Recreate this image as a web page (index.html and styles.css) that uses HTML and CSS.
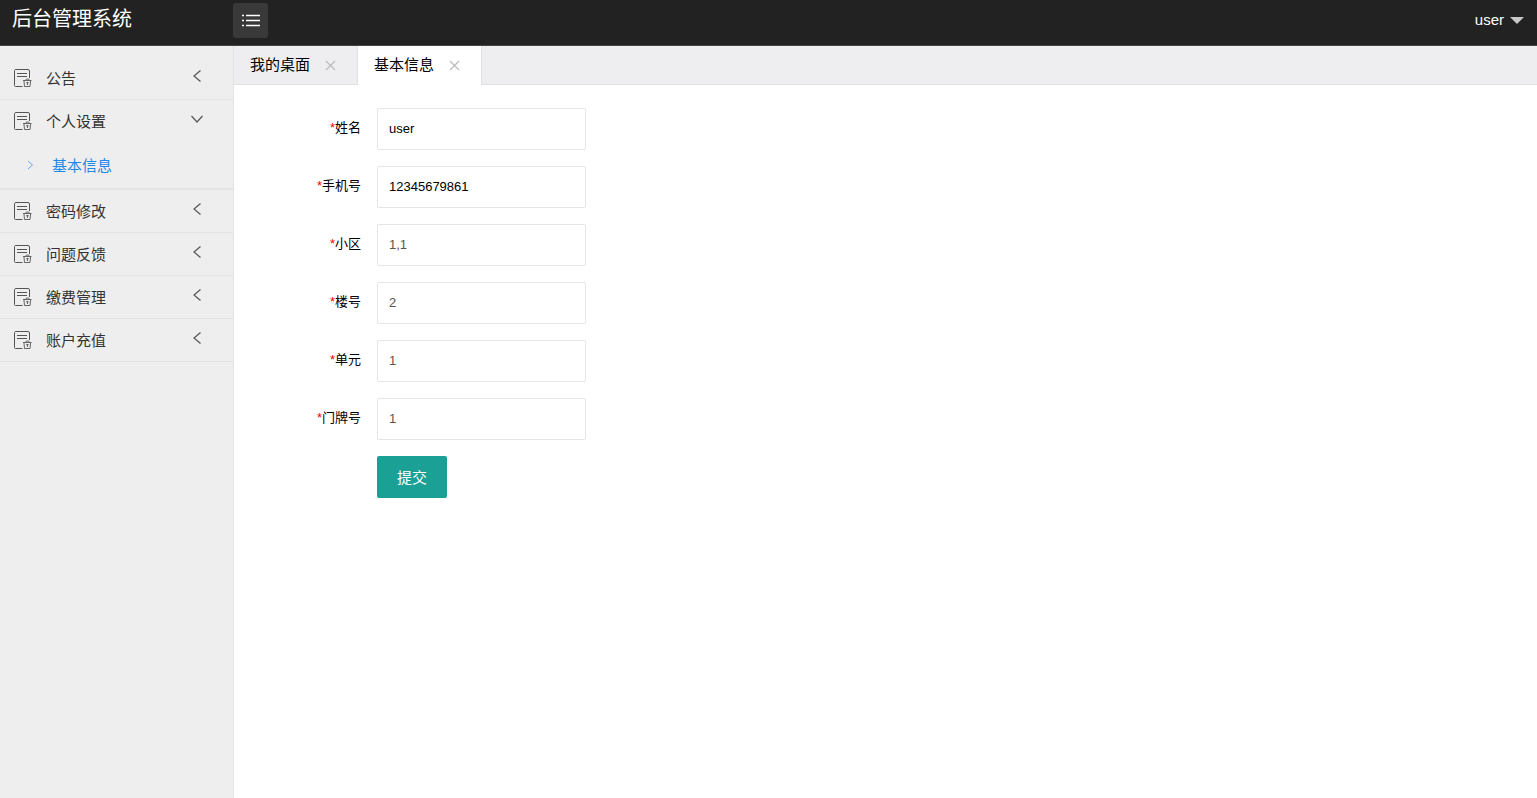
FILE: index.html
```html
<!DOCTYPE html>
<html lang="zh-CN">
<head>
<meta charset="utf-8">
<meta name="viewport" content="width=device-width, initial-scale=1">
<title>后台管理系统</title>
<link rel="stylesheet" href="styles.css">
</head>
<body>
<svg class="symbols" aria-hidden="true">
  <symbol id="doc" viewBox="0 0 19 20">
    <path d="M9.500 18.500H2.500A1 1 0 0 1 1.500 17.500V2.500A1.500 1.500 0 0 1 3 1.500h12a1.500 1.500 0 0 1 1.500 1.500V10M4 5.500h10M4 8.500h10"/>
    <path stroke-width=".9" d="M10 12.500h8.500M11 13l.5 5.500h5.500l.6-5.500M12.500 12.300l1-1.300h2l1 1.300M14.500 14v3M13.200 14.700h2.400"/>
  </symbol>
  <symbol id="left" viewBox="0 0 10 14"><path stroke-width="1.2" d="M8.500 1.500 2 7l6.500 5.500"/></symbol>
  <symbol id="down" viewBox="0 0 14 10"><path stroke-width="1.2" d="M1.500 2 7 8l5.500-6"/></symbol>
  <symbol id="right" viewBox="0 0 7 10"><path d="M1 1l4.500 4L1 9"/></symbol>
  <symbol id="cross" viewBox="0 0 11 11"><path stroke-width="1.200" d="M1 1l9 9M10 1l-9 9"/></symbol>
</svg>
<header class="header">
  <h1 class="brand">后台管理系统</h1>
  <button class="toggle" type="button" aria-label="切换菜单">
    <svg width="19" height="13" viewBox="0 0 19 13"><path stroke-width="1.400" d="M5 1.500h14M5 6.500h14M5 11.500h14M1 1.500h2M1 6.500h2M1 11.500h2"/></svg>
  </button>
  <button class="account" type="button">user<span class="caret"></span></button>
</header>
<div class="body">
  <nav class="sidebar">
    <a class="item" href="#"><svg class="doc"><use href="#doc"/></svg><span class="name">公告</span><svg class="left"><use href="#left"/></svg></a>
    <div class="group">
      <a class="item" href="#"><svg class="doc"><use href="#doc"/></svg><span class="name">个人设置</span><svg class="down"><use href="#down"/></svg></a>
      <a class="subitem" href="#"><svg class="right"><use href="#right"/></svg><span class="subname">基本信息</span></a>
    </div>
    <a class="item" href="#"><svg class="doc"><use href="#doc"/></svg><span class="name">密码修改</span><svg class="left"><use href="#left"/></svg></a>
    <a class="item" href="#"><svg class="doc"><use href="#doc"/></svg><span class="name">问题反馈</span><svg class="left"><use href="#left"/></svg></a>
    <a class="item" href="#"><svg class="doc"><use href="#doc"/></svg><span class="name">缴费管理</span><svg class="left"><use href="#left"/></svg></a>
    <a class="item" href="#"><svg class="doc"><use href="#doc"/></svg><span class="name">账户充值</span><svg class="left"><use href="#left"/></svg></a>
  </nav>
  <main class="main">
    <div class="tabs">
      <div class="tab"><a href="#">我的桌面</a><button class="close" type="button" aria-label="关闭我的桌面"><svg><use href="#cross"/></svg></button></div>
      <div class="tab active"><a href="#">基本信息</a><button class="close" type="button" aria-label="关闭基本信息"><svg><use href="#cross"/></svg></button></div>
    </div>
    <form class="form">
      <div class="row"><label for="name"><span class="star">*</span>姓名</label><input id="name" type="text" value="user"></div>
      <div class="row"><label for="phone"><span class="star">*</span>手机号</label><input id="phone" type="text" value="12345679861"></div>
      <div class="row"><label for="estate"><span class="star">*</span>小区</label><input class="fixed" id="estate" type="text" value="1,1" readonly></div>
      <div class="row"><label for="building"><span class="star">*</span>楼号</label><input class="fixed" id="building" type="text" value="2" readonly></div>
      <div class="row"><label for="unit"><span class="star">*</span>单元</label><input class="fixed" id="unit" type="text" value="1" readonly></div>
      <div class="row"><label for="door"><span class="star">*</span>门牌号</label><input class="fixed" id="door" type="text" value="1" readonly></div>
      <button class="submit" type="submit">提交</button>
    </form>
  </main>
</div>
</body>
</html>
```
FILE: styles.css
```css
* {
  box-sizing: border-box;
}

body {
  margin: 0;
  min-height: 100vh;
  display: flex;
  flex-direction: column;
  font-family: "Liberation Sans", "Noto Sans CJK SC", sans-serif;
  font-size: 15px;
  color: #000;
  background: #fff;
}

a {
  color: inherit;
  text-decoration: none;
}

button,
input {
  font-family: inherit;
}

button {
  border: 0;
  padding: 0;
  background: none;
  cursor: pointer;
}

svg {
  display: block;
  flex: none;
  fill: none;
  stroke: currentColor;
}

.symbols {
  position: absolute;
  width: 0;
  height: 0;
}

.header {
  display: flex;
  align-items: flex-start;
  height: 46px;
  padding: 3px 13px 0 12px;
  background: #222;
  border-bottom: 1px solid #444;
  color: #fff;
}

.brand {
  width: 221px;
  margin: 0;
  font-size: 20px;
  font-weight: 400;
  line-height: 32px;
}

.toggle {
  display: grid;
  place-items: center;
  width: 35px;
  height: 35px;
  border-radius: 3px;
  background: #393939;
  color: #fff;
}

.account {
  display: flex;
  align-items: center;
  gap: 6px;
  margin-left: auto;
  color: #fff;
  font-size: 15px;
  line-height: 34px;
}

.caret {
  border: 7px solid transparent;
  border-top-color: #c8c8c8;
  border-bottom: 0;
}

.body {
  display: flex;
  flex: 1;
}

.sidebar {
  flex: none;
  width: 234px;
  padding-top: 11px;
  background: #eee;
  border-right: 1px solid #e3e3e3;
  color: #333;
}

.item {
  display: flex;
  align-items: center;
  height: 43px;
  padding: 0 29px 0 13px;
  border-bottom: 1px solid #e3e3e3;
}

.name {
  flex: 1;
  margin-left: 14px;
  padding-bottom: 1px;
}

.doc {
  width: 19px;
  height: 20px;
  color: #555;
}

.left,
.down {
  margin-bottom: 4px;
  color: #555;
}

.left {
  width: 10px;
  height: 14px;
  margin-right: 2px;
}

.down {
  width: 14px;
  height: 10px;
}

.group {
  border-bottom: 2px solid #e3e3e3;
}

.group .item {
  height: 42px;
  border-bottom: 0;
}

.subitem {
  display: flex;
  align-items: center;
  gap: 18px;
  height: 46px;
  padding-left: 27px;
  color: #1e88e5;
}

.subname {
  padding-bottom: 1px;
}

.right {
  width: 7px;
  height: 10px;
  color: #6aa5e8;
}

.main {
  flex: 1;
  min-width: 0;
}

.tabs {
  display: flex;
  height: 39px;
  background: #eeeef0;
  border-bottom: 1px solid #e2e2e2;
}

.tab {
  display: flex;
  align-items: center;
  gap: 15px;
  height: 38px;
  padding: 0 21px 0 16px;
  border-right: 1px solid #e2e2e2;
}

.tab a {
  padding-bottom: 4px;
}

.tab.active {
  height: 39px;
  padding-bottom: 1px;
  background: #fff;
}

.close {
  color: #bbb;
}

.close svg {
  width: 11px;
  height: 11px;
}

.form {
  display: flex;
  flex-direction: column;
  gap: 16px;
  padding: 23px 16px;
}

.row {
  display: flex;
  align-items: center;
  gap: 16px;
}

.row label {
  width: 111px;
  padding-bottom: 5px;
  font-size: 13px;
  text-align: right;
}

.star {
  color: #f00;
}

.row input {
  width: 209px;
  height: 42px;
  padding: 0 11px 2px;
  border: 1px solid #e6e6e6;
  border-radius: 2px;
  background: #fff;
  color: #000;
  font-size: 13px;
}

.row .fixed {
  color: #555;
}

.submit {
  width: 70px;
  height: 42px;
  padding-bottom: 1px;
  border-radius: 2px;
  margin-left: 127px;
  background: #1aa094;
  color: #fff;
  font-size: 15px;
}
```
